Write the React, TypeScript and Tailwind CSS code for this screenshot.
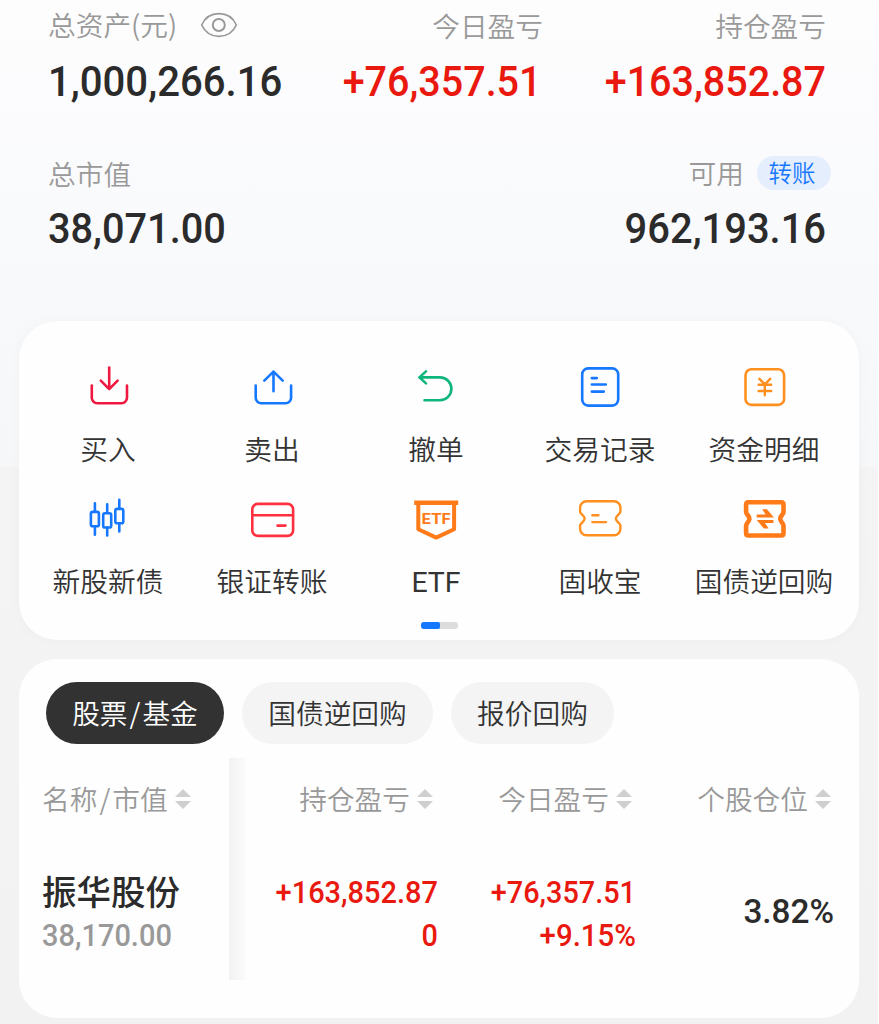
import React from 'react';
import clsx from 'clsx';

type IconProps = { children: React.ReactNode; color: string; width?: number };

const Icon: React.FC<IconProps> = ({ children, color, width = 2.6 }) => (
    <svg viewBox="0 0 48 48" className="h-12 w-12" fill="none" stroke={color} strokeWidth={width} strokeLinecap="round" strokeLinejoin="round">
        {children}
    </svg>
);

const BuyIcon = () => (
    <Icon color="#ee1840">
        <path d="M25.2 5.5V27M16.8 18.7l8.4 8.4 8.4-8.4" />
        <path d="M7.8 23.5v12.3a5.5 5.5 0 0 0 5.5 5.5h24.2a5.5 5.5 0 0 0 5.5-5.5V23.5" />
    </Icon>
);

const SellIcon = () => (
    <Icon color="#1677ff">
        <path d="M25.5 29.3V9.6M16.3 18.7l9.2-9.1 9.2 9.1" />
        <path d="M7.7 23.5v12.3a5.5 5.5 0 0 0 5.5 5.5h24.4a5.5 5.5 0 0 0 5.5-5.5V23.5" />
    </Icon>
);

const CancelIcon = () => (
    <Icon color="#0fb67c">
        <path d="M14 9.4l-6.6 6 6.6 6M7.4 15.4H28a11.4 11.4 0 0 1 0 22.8H12.5" />
    </Icon>
);

const RecordIcon = () => (
    <Icon color="#1677ff">
        <rect x="6.2" y="6.4" width="36" height="37.2" rx="6" />
        <path d="M15.8 16.1h5M15.8 22.5h14M15.8 29.6h12" />
    </Icon>
);

const FundsIcon = () => (
    <Icon color="#ff8f1f">
        <rect x="5.5" y="7.2" width="38.6" height="35.7" rx="6" />
        <path d="m19.4 16.8 5.4 5.6 5.4-5.6M24.8 22.6v10.6M18.6 22.8h12.6M18.6 29h12.6" strokeWidth="2.4" />
    </Icon>
);

const CandleIcon = () => (
    <Icon color="#1677ff">
        <rect x="6.9" y="17.9" width="8" height="14.3" rx="1.8" />
        <rect x="19.2" y="19.2" width="8" height="14.3" rx="1.8" />
        <rect x="31.3" y="14.9" width="8" height="14.3" rx="1.8" />
        <path d="M10.9 9.2v8.5M10.9 32.5v8.2M23.2 10.2v8.5M23.2 33.5v8M35.3 5.9v8.5M35.3 29.5v8" />
    </Icon>
);

const CardIcon = () => (
    <Icon color="#ff3141">
        <rect x="4.3" y="9.9" width="40.8" height="32" rx="5.5" />
        <path d="M4.5 21.3H45M29.5 31.6h8" />
    </Icon>
);

const EtfIcon = () => (
    <Icon color="#ff7a18" width={4}>
        <path d="M2.2 8.8h44" strokeLinecap="butt" strokeWidth="4.4" />
        <path d="M6.3 9v26.3l17.9 8.3 17.9-8.3V9" />
        <text x="9.6" y="30" fill="#ff7a18" stroke="none" className="font-['Roboto'] text-[15.5px] font-bold" textLength="29" lengthAdjust="spacingAndGlyphs">ETF</text>
    </Icon>
);

const TicketIcon = () => (
    <Icon color="#ff8f1f" width={2.4}>
        <path d="M10.5 7.2H38a6.4 6.4 0 0 1 6.4 6.4v4.2c0 2.2-4.6 3.8-4.6 6.8s4.6 4.6 4.6 6.8v3.4a6.4 6.4 0 0 1-6.4 6.4H10.5a6.4 6.4 0 0 1-6.4-6.4v-3.4c0-2.2 4.6-3.8 4.6-6.8s-4.6-4.6-4.6-6.8v-4.2a6.4 6.4 0 0 1 6.4-6.4Z" />
        <path d="M16.4 21.2h6M16.4 28.1H30" />
    </Icon>
);

const RepoIcon = () => (
    <Icon color="#ff7a18" width={4.6}>
        <path d="M8.3 8.3h33q2.2 0 2.2 2.2v7.7c0 2.3-3.3 3.3-3.3 6.6s3.3 4.3 3.3 6.6v7.9q0 2.2-2.2 2.2h-33q-2.2 0-2.2-2.2v-7.9c0-2.3 3.3-3.3 3.3-6.6s-3.3-4.3-3.3-6.6v-7.7q0-2.2 2.2-2.2Z" />
        <path d="M16.7 20.6h9l-3.6-5.4h4.8l7 8.4H16.7ZM33.4 26.1H16.7l7.2 8.4h4.7l-3.6-5.4h8.4Z" fill="#ff7a18" stroke="none" />
    </Icon>
);

const EyeIcon = () => (
    <svg viewBox="0 0 38 26" className="ml-[23px] h-[26px] w-[38px]" fill="none" stroke="#999" strokeWidth="1.7">
        <path d="M1.7 13C5 5.5 11.5 1.7 19 1.7S33 5.5 36.3 13C33 20.5 26.5 24.3 19 24.3S5 20.5 1.7 13Z" />
        <circle cx="18.8" cy="13" r="6" strokeWidth="2" />
    </svg>
);

const SortIcon = () => (
    <svg viewBox="0 0 16 20" className="ml-[7px] h-5 w-4 fill-[#cfcfcf]">
        <path d="M0 8 8 0l8 8ZM0 12h16l-8 8Z" />
    </svg>
);

const Slash = () => <span className="mx-[2px]">/</span>;

const actions = [
    { id: 'buy', label: '买入', icon: <BuyIcon /> },
    { id: 'sell', label: '卖出', icon: <SellIcon /> },
    { id: 'cancel', label: '撤单', icon: <CancelIcon /> },
    { id: 'records', label: '交易记录', icon: <RecordIcon /> },
    { id: 'funds', label: '资金明细', icon: <FundsIcon /> },
    { id: 'ipo', label: '新股新债', icon: <CandleIcon /> },
    { id: 'bank', label: '银证转账', icon: <CardIcon /> },
    { id: 'etf', label: <span className="font-['Roboto'] text-[28.5px] font-normal">ETF</span>, icon: <EtfIcon /> },
    { id: 'fixed', label: '固收宝', icon: <TicketIcon /> },
    { id: 'repo', label: '国债逆回购', icon: <RepoIcon /> },
];

const tabs = [
    { id: 'stock', label: <>股票<Slash />基金</>, style: 'w-[178px] bg-[#323232] text-white' },
    { id: 'repo', label: '国债逆回购', style: 'w-[191px] bg-[#f4f4f5] text-[#333]' },
    { id: 'quote', label: '报价回购', style: 'w-[163px] bg-[#f4f4f5] text-[#333]' },
];

const Num: React.FC<{ className?: string; children: React.ReactNode }> = ({ className, children }) => (
    <span className={clsx("block whitespace-nowrap font-['Roboto'] font-medium", className)}>{children}</span>
);

const HeadCell: React.FC<{ label: React.ReactNode; className?: string }> = ({ label, className }) => (
    <div className={clsx('flex h-[42px] items-center whitespace-nowrap text-[#999]', className)}>
        <span>{label}</span>
        <SortIcon />
    </div>
);

const Summary = () => (
    <section className="h-[321px] pl-12 pr-[52px] text-[#999]">
        <div className="grid h-[148px] grid-cols-[1fr_auto_283px]">
            <div>
                <div className="flex h-[50px] items-center whitespace-nowrap">总资产(元)<EyeIcon /></div>
                <Num className="origin-left scale-x-[.955] text-[42px] leading-[63px] text-[#2b2b2b]">1,000,266.16</Num>
            </div>
            <div className="text-right">
                <div className="h-[50px] leading-[50px]">今日盈亏</div>
                <Num className="mr-[2px] origin-right scale-x-[.94] text-[42px] leading-[63px] text-[#e9190f]">+76,357.51</Num>
            </div>
            <div className="text-right">
                <div className="h-[50px] leading-[50px]">持仓盈亏</div>
                <Num className="origin-right scale-x-[.94] text-[42px] leading-[63px] text-[#e9190f]">+163,852.87</Num>
            </div>
        </div>
        <div className="flex justify-between">
            <div>
                <div className="h-[50px] leading-[50px]">总市值</div>
                <Num className="origin-left scale-x-[.945] text-[42px] leading-[62px] text-[#2b2b2b]">38,071.00</Num>
            </div>
            <div className="text-right">
                <div className="-mr-[5px] flex h-[50px] items-center justify-end">
                    可用
                    <span className="ml-[13px] flex h-[34px] w-[74px] items-center justify-center rounded-full bg-[#e5eefc] pr-1 text-[23.5px] text-[#1677ff]">转账</span>
                </div>
                <Num className="origin-right scale-x-[.95] text-[42px] leading-[62px] text-[#2b2b2b]">962,193.16</Num>
            </div>
        </div>
    </section>
);

const Actions = () => (
    <section className="mx-auto h-[319px] w-[840px] rounded-[38px] bg-[#fefefe] pl-[7px] pr-[13px] pt-[41px] text-[#333] shadow-[0_0_12px_rgba(0,0,0,0.03)]">
        <div className="grid grid-cols-5">
            {actions.map(({ id, label, icon }) => (
                <div key={id} className="flex h-[132px] flex-col items-center">
                    {icon}
                    <span className="mt-[17px] whitespace-nowrap leading-[42px]">{label}</span>
                </div>
            ))}
        </div>
        {/* Pager */}
        <div className="ml-[395px] mt-[-4px] flex h-[7px] w-[37px] overflow-hidden rounded-[3px] bg-[#dcdcdc]">
            <div className="w-[19px] rounded-r-[2px] bg-[#1677ff]" />
        </div>
    </section>
);

const Holdings = () => (
    <section className="mx-auto mt-[19px] h-[359px] w-[840px] rounded-[38px] bg-[#fefefe] pt-[23px]">
        <div className="flex gap-[18px] pl-[27px]">
            {tabs.map(({ id, label, style }) => (
                <button key={id} className={clsx('h-[62px] whitespace-nowrap rounded-full', style)}>{label}</button>
            ))}
        </div>
        <div className="mt-[14px] flex">
            <div className="w-[210px] pl-[23px] pt-5">
                <HeadCell label={<>名称<Slash />市值</>} />
                <div className="mt-[45px] text-[34.5px] font-medium leading-[50px] text-[#2b2b2b]">振华股份</div>
                <Num className="mt-px origin-left scale-x-[.935] text-[31px] leading-[40px] text-[#999]">38,170.00</Num>
            </div>
            <div className="h-[222px] w-[17px] bg-linear-to-r from-[#f2f2f3] to-[#fbfbfb]" />
            <div className="grid flex-1 grid-cols-[192px_198px_198px] pt-5 text-[#e9190f]">
                <div className="text-right">
                    <HeadCell label="持仓盈亏" className="mr-[5px] justify-end" />
                    <Num className="mt-[51px] origin-right scale-x-[.935] text-[31px] leading-[43px]">+163,852.87</Num>
                    <Num className="origin-right scale-x-[.93] text-[31px] leading-[43px]">0</Num>
                </div>
                <div className="text-right">
                    <HeadCell label="今日盈亏" className="mr-[4px] justify-end" />
                    <Num className="mt-[51px] origin-right scale-x-[.93] text-[31px] leading-[43px]">+76,357.51</Num>
                    <Num className="origin-right scale-x-[.95] text-[31px] leading-[43px]">+9.15%</Num>
                </div>
                <div className="text-right">
                    <HeadCell label="个股仓位" className="mr-[3px] justify-end" />
                    <Num className="mt-[70px] origin-right scale-x-[.98] text-[34px] leading-[43px] text-[#2b2b2b]">3.82%</Num>
                </div>
            </div>
        </div>
    </section>
);

const App: React.FC = () => (
    <div className="h-[1024px] w-[879px] overflow-hidden border-r border-white bg-[linear-gradient(#fdfdfe,#f8f9fb_300px,#f6f7f9_467px,#f4f4f5_467px,#f2f2f3)] font-['Noto_Sans_CJK_SC',sans-serif] text-[27.7px] font-[350]">
        <Summary />
        <Actions />
        <Holdings />
    </div>
);

export default App;
